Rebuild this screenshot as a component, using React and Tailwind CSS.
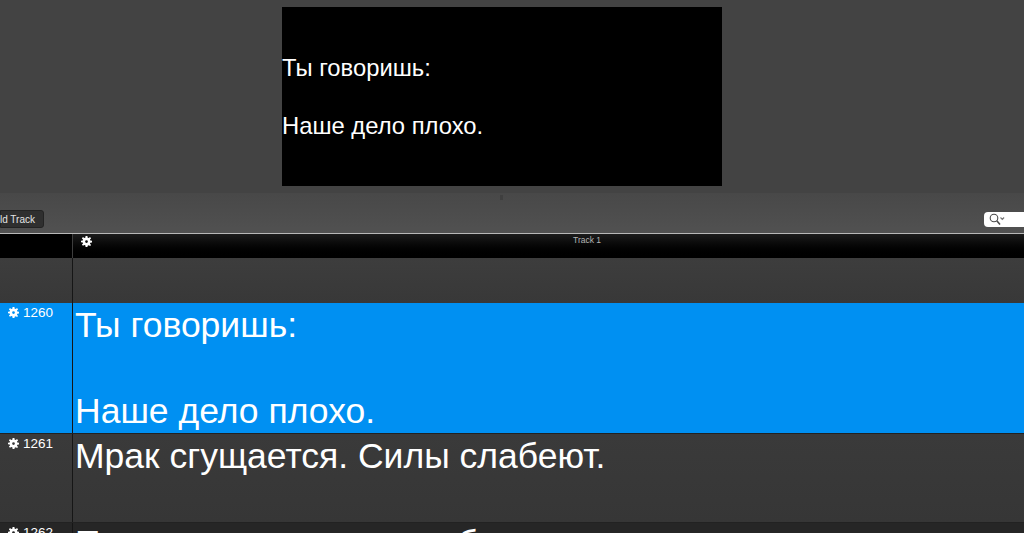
import React from 'react';

const sans = "font-['Liberation_Sans',Arial,sans-serif]";

// small solid gear used on the track header and on each row
const Gear = ({ className }) => (
  <svg viewBox="0 0 12 12" className={className} fill="currentColor">
    <path
      fillRule="evenodd"
      d="M5 0h2l.3 1.8 1.1.5L9.900 1.200 11 2.600 9.800 3.900l.3 1.100L12 5.300v1.700l-1.900.3-.3 1.100 1.200 1.300-1.100 1.300-1.500-1-1.100.5L7 12H5l-.3-1.800-1.100-.5-1.500 1L1 9.400l1.200-1.300-.3-1.100L0 6.700V5.300l1.900-.3.300-1.100L1 2.600l1.100-1.400 1.500 1.100 1.100-.5zM6 4.500a1.500 1.500 0 1 0 0 3 1.500 1.500 0 0 0 0-3z"
    />
  </svg>
);

// one numbered row of the cue table
const CueRow = ({ number, height, bg, children }) => (
  <div className={`flex shrink-0 ${height} ${bg} border-b border-[#222222]`}>
    <div className="w-[73px] shrink-0 flex items-start gap-[4px] pl-[8px] pt-[2px] border-r border-[#161616]">
      <Gear className="w-[11px] h-[11px] mt-[2px] text-white" />
      <span className="text-[13.500px] leading-[15px] text-white">{number}</span>
    </div>
    <div className="flex-1 pl-[2px] pt-px text-[35.500px] leading-[43px] text-white whitespace-pre-line">{children}</div>
  </div>
);

export default function App() {
  return (
    <div className={`w-[1024px] h-[533px] overflow-hidden flex flex-col bg-[#434343] ${sans}`}>
      {/* Preview */}
      <div className="h-[193px] shrink-0 pt-[7px] pl-[282px]">
        <div className="w-[440px] h-[179px] bg-black pt-[46px] text-[23.800px] leading-[29px] text-white">
          <p>Ты говоришь:</p>
          <p className="mt-[29px]">Наше дело плохо.</p>
        </div>
      </div>

      {/* Toolbar */}
      <div className="relative h-[40px] shrink-0 flex items-center justify-between bg-gradient-to-b from-[#484848] to-[#515151]">
        <div className="w-[3px] h-[5px] absolute left-[500px] top-[2px] bg-[#3f3f3f]" />
        <button className="w-[44px] h-[18px] mt-[12px] flex items-center justify-end pr-[8px] rounded-r-[3px] bg-[#2f2f2f] border border-[#232323] text-[10px] text-[#e4e4e4] whitespace-nowrap">
          ld Track
        </button>
        <div className="w-[40px] h-[15px] mt-[13px] flex items-center pl-[5px] rounded-l-[4px] bg-white">
          <svg width="18" height="13" viewBox="0 0 18 13" fill="none" stroke="#4a4a4a" strokeWidth="1.100">
            <circle cx="5" cy="5" r="3.800" />
            <path d="M7.800 7.800 11 11.500" strokeWidth="1.600" />
            <path d="M11.500 4.500l1.800 1.800 1.800-1.800" strokeWidth="1.200" stroke="#777" />
          </svg>
        </div>
      </div>

      {/* Table header */}
      <div className="h-[25px] shrink-0 flex border-t border-[#b8b8b8] bg-black">
        <div className="w-[73px] shrink-0 border-r border-[#3d3d3d]" />
        <div className="relative flex-1 bg-gradient-to-b from-[#1c1c1c] via-[#060606] to-black">
          <Gear className="absolute left-[8px] top-[2px] w-[11px] h-[11px] text-white" />
          <span className="absolute left-[500px] top-px text-[8.500px] leading-[10px] text-[#b4b4b4]">Track 1</span>
        </div>
      </div>

      {/* Rows */}
      <div className="flex shrink-0 h-[45px] bg-gradient-to-b from-[#3d3d3d] to-[#383838]">
        <div className="w-[73px] shrink-0 border-r border-[#161616]" />
      </div>
      <CueRow number="1260" height="h-[131px]" bg="bg-[#0090f2]">{'Ты говоришь:\n\nНаше дело плохо.'}</CueRow>
      <CueRow number="1261" height="h-[89px]" bg="bg-gradient-to-b from-[#3a3a3a] to-[#363636]">Мрак сгущается. Силы слабеют.</CueRow>
      <CueRow number="1262" height="h-[40px]" bg="bg-[#262626]">
        <div className="-mt-[2px]">Пока мы говорим, наш бастион пал.</div>
      </CueRow>
    </div>
  );
}
